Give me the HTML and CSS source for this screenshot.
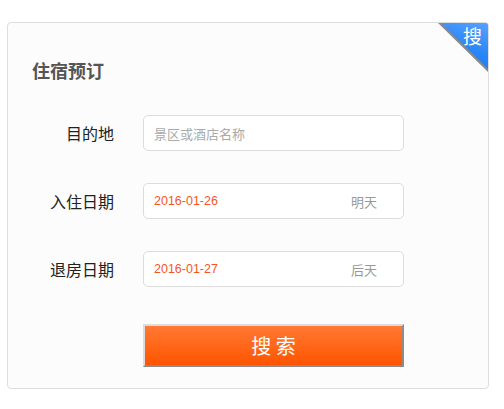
FILE: index.html
```html
<!DOCTYPE html>
<html lang="zh-CN">
<head>
<meta charset="utf-8">
<title>住宿预订</title>
<link rel="stylesheet" href="styles.css">
</head>
<body>
<div class="card">
  <div class="corner"></div>
  <span class="corner-text">搜</span>
  <h2 class="title">住宿预订</h2>
  <div class="form">
    <div class="label">目的地</div>
    <div class="field"><span class="placeholder">景区或酒店名称</span></div>
    <div class="label">入住日期</div>
    <div class="field"><span class="date">2016-01-26</span><span class="hint">明天</span></div>
    <div class="label">退房日期</div>
    <div class="field"><span class="date">2016-01-27</span><span class="hint">后天</span></div>
    <div class="btn-cell"><button class="btn">搜 索</button></div>
  </div>
</div>
</body>
</html>
```
FILE: styles.css
```css
* { box-sizing: border-box; }
body {
  margin: 0;
  padding: 22px 0 0 7px;
  background: #fff;
  font-family: "Liberation Sans", "Noto Sans CJK SC", sans-serif;
}
.card {
  position: relative;
  width: 482px;
  height: 367px;
  border: 1px solid #dedede;
  border-radius: 4px;
  background: #fcfcfc;
  padding: 35px 0 0 0;
  overflow: hidden;
}
.corner {
  position: absolute;
  top: -1px;
  right: -1px;
  width: 52px;
  height: 51px;
  background: #8a8a8a;
  clip-path: polygon(0 0, 100% 0, 100% 100%);
}
.corner::before {
  content: "";
  position: absolute;
  top: 0;
  right: 0;
  width: 51px;
  height: 49px;
  background: linear-gradient(200deg, #5aa3ff 0%, #2a86f7 50%, #1477f0 100%);
  clip-path: polygon(2px 0, 100% 0, 100% calc(100% - 1px));
}
.corner-text {
  position: absolute;
  top: 1px;
  right: 6px;
  color: #fff;
  font-size: 19px;
  line-height: 24px;
  font-family: "Noto Sans CJK SC", sans-serif;
}
.title {
  margin: 0;
  padding-left: 24px;
  font-size: 18px;
  line-height: 24px;
  font-weight: bold;
  color: #555;
  font-family: "Noto Sans CJK SC", sans-serif;
}
.form {
  display: grid;
  grid-template-columns: 106px 261px;
  column-gap: 29px;
  row-gap: 32px;
  margin-top: 33px;
}
.label {
  text-align: right;
  font-size: 16px;
  line-height: 36px;
  color: #222;
  font-family: "Noto Sans CJK SC", sans-serif;
}
.field {
  height: 36px;
  border: 1px solid #dcdcdc;
  border-radius: 5px;
  background: #fff;
  display: flex;
  align-items: center;
  justify-content: space-between;
  padding: 0 26px 0 10px;
}
.placeholder {
  font-size: 13px;
  color: #aaa;
  font-family: "Noto Sans CJK SC", sans-serif;
}
.date {
  font-size: 12.5px;
  color: #f5561e;
}
.hint {
  font-size: 13px;
  color: #999;
  font-family: "Noto Sans CJK SC", sans-serif;
}
.btn-cell {
  grid-column: 2;
  margin-top: 5px;
}
.btn {
  display: block;
  width: 261px;
  height: 43px;
  border-style: solid;
  border-width: 2px;
  border-color: #dcdcdc #8c8c8c #8c8c8c #dcdcdc;
  border-radius: 0;
  background: linear-gradient(#ff7a33, #ff5400);
  color: #fff;
  font-size: 20px;
  line-height: 37px;
  padding: 0;
  font-family: "Noto Sans CJK SC", sans-serif;
  cursor: pointer;
}
```
